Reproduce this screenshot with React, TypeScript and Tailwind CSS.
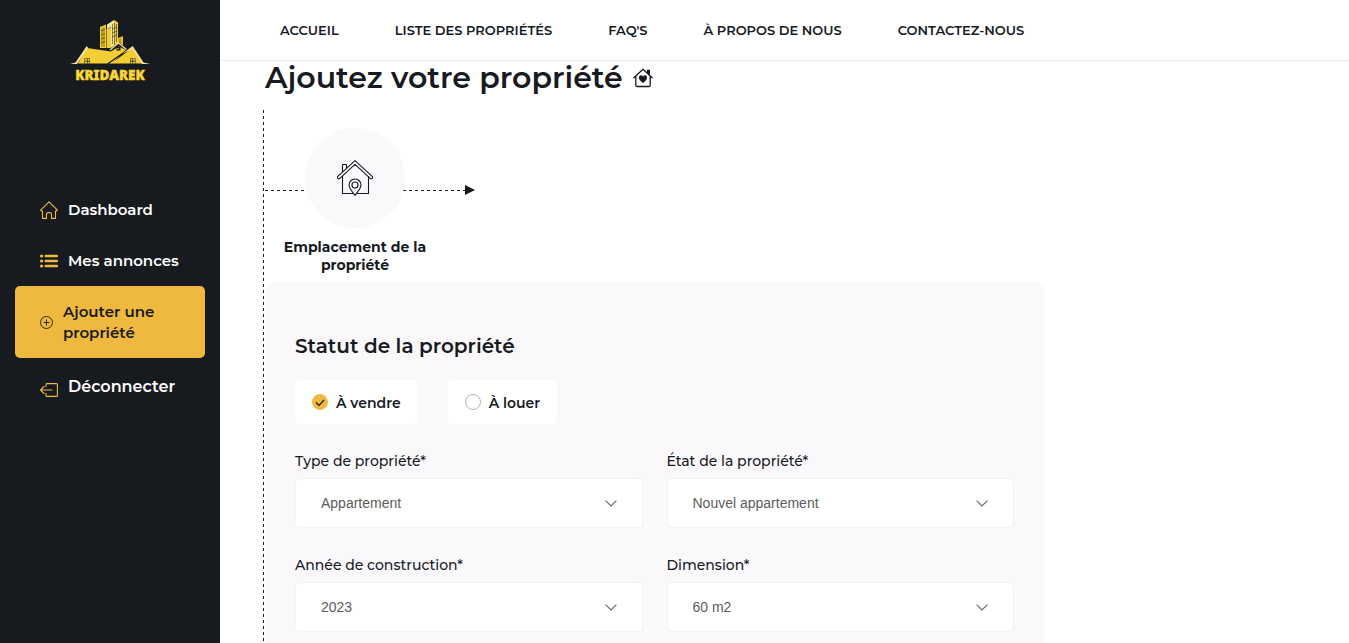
import React, { useState } from "react";

const navLinks = ["ACCUEIL", "LISTE DES PROPRIÉTÉS", "FAQ'S", "À PROPOS DE NOUS", "CONTACTEZ-NOUS"];

const fields = [
  { id: "type", label: "Type de propriété*", options: ["Appartement", "Maison", "Villa"] },
  { id: "etat", label: "État de la propriété*", options: ["Nouvel appartement", "Ancien appartement"] },
  { id: "annee", label: "Année de construction*", options: ["2023", "2022", "2021"] },
  { id: "dimension", label: "Dimension*", options: ["60 m2", "80 m2", "100 m2"] },
];

function Logo() {
  return (
    <svg viewBox="0 0 80 66" className="h-[66px] w-20" role="img" aria-label="Kridarek">
      <path d="M30 7l6-2.500V28h-6z" fill="#f2cd33" />
      <path d="M36 9l8-2v21h-8z" fill="#f2cd33" />
      <path d="M37 4.500L44 0v25l-3 2V7l-4 2z" fill="#f6e3a0" />
      <path d="M44 0l4 2.500V24l-4 3z" fill="#f2cd33" />
      <path d="M48 18l5-2v10h-5z" fill="#e9bd2a" />
      <path d="M32 8v19M34 7v20M36.500 6v22M42.500 4v20M44.500 3v22M46.500 4v18M50 19v6" stroke="#171a1f" strokeWidth="0.500" />
      <path d="M31 11l4-1.500M31 15l4-1.500M31 19l4-1.500M31 23l4-1.500M42 9l5-2M42 13l5-2M42 17l5-2" stroke="#171a1f" strokeWidth="0.500" />
      <path d="M15 28l2-2.500 20 5 12-8 8 6 5-3L75 44H6z" fill="#171a1f" />
      <path d="M17 28l24 3.500 8-5 7 3.500-14 13.500H8z" fill="#f2cd33" />
      <path d="M62.500 28L73 43.500H41z" fill="#f2cd33" />
      <path d="M37.500 44L61 27.500" stroke="#171a1f" strokeWidth="1.300" />
      <path d="M40 30l8.500-7 8 6.500" fill="none" stroke="#f6e3a0" strokeWidth="1.200" />
      <path d="M0 44l5.500-1.500L16.700 26l1.500 2L7 44zM80 44l-6.500-1.500L62.700 26 52 34l10.500-5L72 44z" fill="#f6e3a0" />
      <path d="M14.500 38.500h5.500v5h-5.500zM60 38.500h5.500v5H60zM46.500 27h4v3.500h-4z" fill="#171a1f" />
      <path d="M15 39h2v1.800h-2zM17.600 39h2v1.800h-2zM15 41.400h2v1.800h-2zM17.600 41.400h2v1.800h-2zM60.500 39h2v1.800h-2zM63.100 39h2v1.800h-2zM60.500 41.400h2v1.800h-2zM63.100 41.400h2v1.800h-2zM47.500 28h1.300v1.300h-1.300z" fill="#f2cd33" />
      <text x="40" y="59.500" textAnchor="middle" fontFamily="'Noto Sans', sans-serif" fontWeight="900" fontSize="13.500" fill="#f7d836" stroke="#f7d836" strokeWidth="0.400">KRIDAREK</text>
    </svg>
  );
}

function HomeIcon() {
  return (
    <svg viewBox="0 0 18 18" className="size-[18px] shrink-0" fill="none" stroke="#efb93f" strokeWidth="1.100" strokeLinejoin="round" aria-hidden="true">
      <path d="M.6 9.200L9 .8l8.400 8.400-.8.8H15.500v7.400h-4v-4.200a1.600 1.600 0 0 0-1.600-1.600H8.100a1.600 1.600 0 0 0-1.600 1.600v4.200h-4V10H1.400z" />
    </svg>
  );
}

function ListIcon() {
  return (
    <svg viewBox="0 0 18 14" className="h-3.5 w-[18px] shrink-0" fill="#efb93f" aria-hidden="true">
      <circle cx="1.600" cy="2" r="1.600" /><circle cx="1.600" cy="7" r="1.600" /><circle cx="1.600" cy="12" r="1.600" />
      <rect x="4.500" y="0.800" width="13.500" height="2.400" rx="1" /><rect x="4.500" y="5.800" width="13.500" height="2.400" rx="1" /><rect x="4.500" y="10.800" width="13.500" height="2.400" rx="1" />
    </svg>
  );
}

function PlusIcon() {
  return (
    <svg viewBox="0 0 13 13" className="size-[13px] shrink-0" fill="none" stroke="#171a1f" strokeWidth="0.900" aria-hidden="true">
      <circle cx="6.500" cy="6.500" r="6" /><path d="M6.500 3.500v6M3.500 6.500h6" />
    </svg>
  );
}

function LogoutIcon() {
  return (
    <svg viewBox="0 0 18 14" className="mt-1.5 h-3.5 w-[18px] shrink-0" fill="none" stroke="#efb93f" strokeWidth="1.100" strokeLinejoin="round" strokeLinecap="round" aria-hidden="true">
      <path d="M6 3.500V1.500Q6 .6 7 .6h9.400q1 0 1 1v10.800q0 1-1 1H7q-1 0-1-1v-2" /><path d="M12 7H.8M4 3.500L.6 7 4 10.500" />
    </svg>
  );
}

function HeartHouse() {
  return (
    <svg viewBox="0 0 20 20" className="size-5" fill="none" stroke="#171a1f" strokeWidth="1.300" strokeLinejoin="round" strokeLinecap="round" aria-hidden="true">
      <path d="M.8 9.800L10 1.200l9.200 8.600M2.800 8.500v8.700q0 1.300 1.300 1.300h11.800q1.300 0 1.300-1.300V8.500" />
      <path d="M14 1.800h3v6l-3-3z" fill="#171a1f" stroke="none" />
      <path d="M10 15C4.300 11.300 5.600 7.300 8 7.300q1.400 0 2 1.200.6-1.200 2-1.200c2.400 0 3.700 4-2 7.700z" fill="#171a1f" stroke="none" />
    </svg>
  );
}

function LocationHouse() {
  return (
    <svg viewBox="0 0 36 36" className="size-9" fill="none" stroke="#171a1f" strokeWidth="1.100" strokeLinejoin="round" aria-hidden="true">
      <path d="M18 .6L.8 16.300a1.400 1.400 0 0 0 2 2L18 4.300l15.200 14a1.400 1.400 0 0 0 2-2z" />
      <path d="M5.500 12V4.500h4v4M5.500 16v17.500h10.500M20 33.500h11.500V16" />
      <path d="M18 35.300c-3-4-6-7-6-10.300a6 6 0 0 1 12 0c0 3.300-3 6.300-6 10.300z" /><circle cx="18" cy="25" r="3" />
    </svg>
  );
}

const menu = [
  { label: "Dashboard", icon: <HomeIcon /> },
  { label: "Mes annonces", icon: <ListIcon /> },
];

export default function App() {
  const [status, setStatus] = useState("vendre");
  return (
    <div className="flex h-screen overflow-hidden bg-white font-[Montserrat,Inter,sans-serif] text-[#171a1f]">
      <aside className="w-[220px] shrink-0 bg-[#171a1f] px-[15px] pt-5">
        <a href="#" className="flex justify-center"><Logo /></a>
        <nav className="mt-[98px] text-[15px] font-semibold text-white">
          {menu.map((m) => (
            <a key={m.label} href="#" className="flex h-[51px] items-center gap-2.5 pl-[25px]">{m.icon}<span className="pt-0.5">{m.label}</span></a>
          ))}
          <a href="#" className="flex h-[72px] items-center gap-2.5 rounded-[5px] bg-[#efb93f] pr-6 pl-[25px] leading-[21px] text-[#171a1f]"><PlusIcon />Ajouter une propriété</a>
          <a href="#" className="flex h-[58px] items-center gap-2.5 pl-[25px] text-base"><LogoutIcon />Déconnecter</a>
        </nav>
      </aside>
      <div className="flex min-w-0 flex-1 flex-col">
        <header className="shrink-0 border-b border-[#ebebeb] pl-[60px]">
          <nav className="flex h-[60px] items-center gap-14 pt-px text-[13px] font-semibold">
            {navLinks.map((n) => <a key={n} href="#" className="whitespace-nowrap">{n}</a>)}
          </nav>
        </header>
        <main className="min-h-0 flex-1 pl-[43px]">
          <h1 className="flex h-[49px] items-start gap-2.5 pl-0.5 text-[30px] leading-[34px] font-semibold">Ajoutez votre propriété<span className="pt-[7px]"><HeartHouse /></span></h1>
          <div className="flex max-w-[781px]">
            <div className="w-px shrink-0 bg-[repeating-linear-gradient(to_bottom,#171a1f_0px,#171a1f_3px,transparent_3px,transparent_6px)]" />
            <div className="min-w-0 flex-1 pl-px">
              <div className="relative w-[180px] pt-[18px]">
                <div className="absolute top-[75px] left-0 flex w-[210px] items-center">
                  <span className="h-px flex-1 bg-[repeating-linear-gradient(to_right,#171a1f_0px,#171a1f_3px,transparent_3px,transparent_6px)]" />
                  <svg viewBox="0 0 10 10" className="size-2.5" fill="#171a1f" aria-hidden="true"><path d="M0 0l10 5-10 5z" /></svg>
                </div>
                <div className="relative mx-auto flex size-[100px] items-center justify-center rounded-full bg-[#faf8fb]"><LocationHouse /></div>
                <p className="mt-2.5 px-4 text-center text-sm leading-[18px] font-bold">Emplacement de la propriété</p>
              </div>
              <form className="mt-2 rounded-[10px] bg-[#faf8fb] px-[30px] pt-[50px] pb-[60px]">
                <h2 className="text-xl leading-7 font-semibold">Statut de la propriété</h2>
                <div className="mt-5 flex gap-[30px]">
                  {[["vendre", "À vendre"], ["louer", "À louer"]].map(([v, l]) => (
                    <label key={v} className="relative flex h-11 items-center gap-2 rounded-[5px] bg-white px-[17px] text-sm font-semibold">
                      <input type="radio" name="statut" checked={status === v} onChange={() => setStatus(v)} className="peer size-4 appearance-none rounded-full border border-[#b5b5b5] checked:border-[#efb93f] checked:bg-[#efb93f]" />
                      <svg viewBox="0 0 16 16" className="pointer-events-none absolute left-[17px] hidden size-4 peer-checked:block" fill="none" stroke="#171a1f" strokeWidth="1.200" aria-hidden="true"><path d="M4 8.500l3 3 5-5.500" /></svg>
                      <span className="pt-0.5">{l}</span>
                    </label>
                  ))}
                </div>
                <div className="mt-[26px] grid grid-cols-2 gap-x-6 gap-y-[26px]">
                  {fields.map((f) => (
                    <div key={f.id}>
                      <label htmlFor={f.id} className="block text-sm leading-[22px] font-medium">{f.label}</label>
                      <div className="relative mt-1.5 flex items-center">
                        <select id={f.id} className="h-[50px] w-full appearance-none rounded-[5px] border border-[#f4f2f5] bg-white px-[25px] font-['Liberation_Sans',Arial,sans-serif] text-sm text-[#5c5c5c]">
                          {f.options.map((o) => <option key={o}>{o}</option>)}
                        </select>
                        <svg viewBox="0 0 12 8" className="pointer-events-none absolute right-[26px] h-2 w-3" fill="none" stroke="#666" strokeWidth="1.100" aria-hidden="true"><path d="M.6 1.600L6 7l5.400-5.400" /></svg>
                      </div>
                    </div>
                  ))}
                </div>
              </form>
            </div>
          </div>
        </main>
      </div>
    </div>
  );
}
